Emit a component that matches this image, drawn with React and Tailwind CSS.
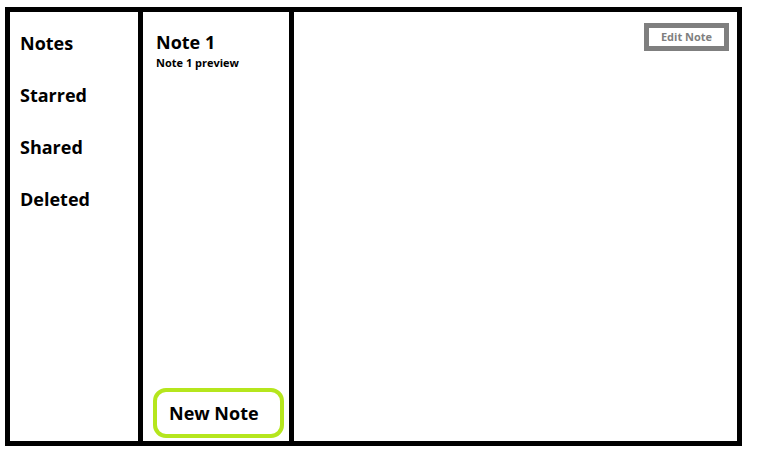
const font = { fontFamily: '"Open Sans", "Noto Sans", sans-serif' };

const menu = ["Notes", "Starred", "Shared", "Deleted"];

export default function App() {
  return (
    <div className="min-h-[457px] w-[757px] bg-white pl-[5px] pt-[7px]" style={font}>
      <div className="flex h-[439px] w-[737px] border-[5px] border-black">
        <nav className="flex w-[133px] flex-col gap-[28px] border-r-[5px] border-black pl-[10px] pt-[19px]">
          {menu.map((item) => (
            <div key={item} className="text-[18px] font-bold leading-[24px] text-black">
              {item}
            </div>
          ))}
        </nav>

        <section className="flex w-[151px] flex-col justify-between border-r-[5px] border-black pb-[3px] pl-[10px]">
          <div className="pl-[3px] pt-[18px]">
            <div className="text-[18px] font-bold leading-[24px] text-black">Note 1</div>
            <div className="mt-[2px] text-[11px] font-bold leading-[14px] text-black">Note 1 preview</div>
          </div>
          <button
            type="button"
            className="flex h-[50px] w-[131px] items-center rounded-[13px] border-4 border-[#b5e61d] bg-white pl-[12px] text-[18px] font-bold text-black"
          >
            New Note
          </button>
        </section>

        <main className="flex flex-1 justify-end pr-[8px] pt-[11px]">
          <button
            type="button"
            className="flex h-[28px] w-[85px] items-center justify-center border-[5px] border-[#7f7f7f] bg-white text-[11px] font-bold text-[#7f7f7f]"
          >
            Edit Note
          </button>
        </main>
      </div>
    </div>
  );
}
